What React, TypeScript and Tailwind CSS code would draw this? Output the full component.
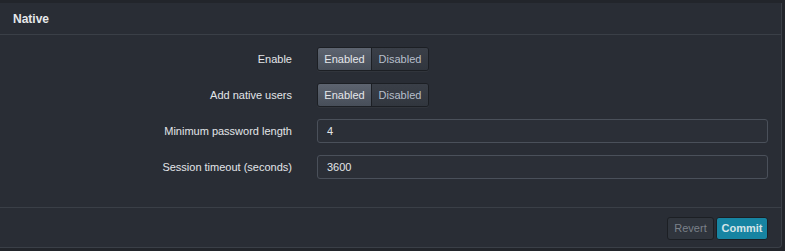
import React from 'react';

const font = { fontFamily: '"Liberation Sans", Arial, sans-serif' };

function Toggle() {
  return (
    <div className="flex h-[24px] rounded-[3px] border border-[#1c1f24] shadow-[0_1px_0_rgba(255,255,255,0.04)] overflow-hidden">
      <button className="w-[54px] h-full text-[11px] text-[#e4e7eb] bg-gradient-to-b from-[#5d6470] to-[#474e59] border-r border-[#1c1f24]">
        Enabled
      </button>
      <button className="w-[56px] h-full text-[11px] text-[#b7bfca] bg-gradient-to-b from-[#3a3f48] to-[#31363e]">
        Disabled
      </button>
    </div>
  );
}

function Row({ label, children }: { label: string; children: React.ReactNode }) {
  return (
    <div className="flex items-center h-[24px]">
      <div className="w-[292px] text-right text-[11px] text-[#e2e5e9]">{label}</div>
      <div className="ml-[25px] flex-1">{children}</div>
    </div>
  );
}

function TextInput({ value }: { value: string }) {
  return (
    <div className="h-[24px] w-[451px] rounded-[3px] border border-[#4a505a] bg-[#2b2f37] flex items-center px-[9px] text-[11px] text-[#e2e5e9]">
      {value}
    </div>
  );
}

export default function App() {
  return (
    <div className="w-[785px] h-[251px] bg-[#22252b] pt-[3px]" style={font}>
      <div className="w-[782px] h-[245px] bg-[#292d35] border-r border-b border-[#3a3f47] rounded-br-[4px] flex flex-col">
        <div className="h-[32px] border-b border-[#3a3f47] flex items-center pl-[13px] text-[12px] font-bold text-[#e6e8eb]">
          Native
        </div>
        <div className="flex flex-col gap-[12px] pt-[12px] h-[172px]">
          <Row label="Enable"><div className="flex"><Toggle /></div></Row>
          <Row label="Add native users"><div className="flex"><Toggle /></div></Row>
          <Row label="Minimum password length"><TextInput value="4" /></Row>
          <Row label="Session timeout (seconds)"><TextInput value="3600" /></Row>
        </div>
        <div className="flex-1 border-t border-[#3a3f47] flex items-start justify-end pt-[9px] pr-[13px] gap-[2px]">
          <button className="h-[23px] w-[47px] rounded-[3px] border border-[#1c1f24] bg-[#30353d] text-[11px] text-[#7b818a]">
            Revert
          </button>
          <button className="h-[23px] w-[52px] rounded-[3px] border border-[#1c1f24] bg-[#1784a2] text-[11px] font-bold text-[#d5e4e9]">
            Commit
          </button>
        </div>
      </div>
    </div>
  );
}
